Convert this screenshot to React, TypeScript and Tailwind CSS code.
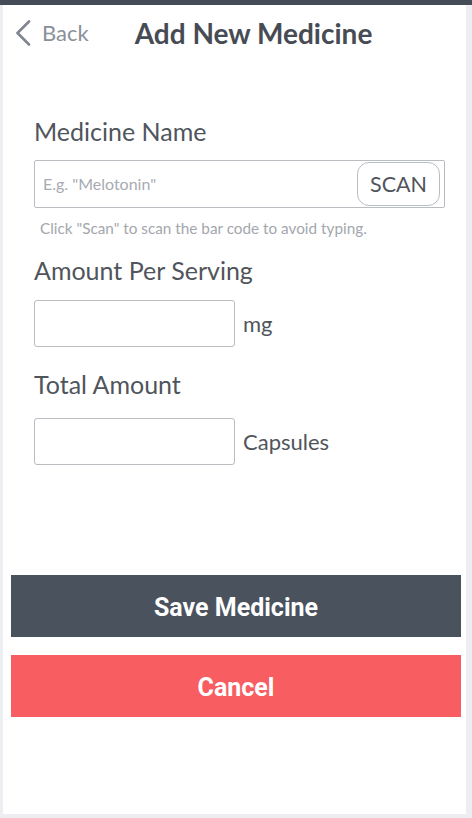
const lato = "font-['Lato','Liberation_Sans',sans-serif]";

const AddMedicine = () => {
  return (
    <div className="w-[472px] h-[818px] bg-[#eceef1] flex flex-col overflow-hidden">
      {/* top status strip */}
      <div className="h-[5px] bg-[#454c57]" />

      <div className={`ml-[3px] mr-[6px] mb-[4px] flex-1 bg-white flex flex-col ${lato}`}>
        {/* Header */}
        <div className="h-[55px] flex items-center">
          <button className="flex items-center text-[#8a9099] ml-[12px]">
            <svg width="16" height="26" viewBox="0 0 16 26" fill="none">
              <polyline points="14,1.5 2.5,13 14,24.5" stroke="#80868f" strokeWidth="2.6" strokeLinecap="round" strokeLinejoin="round" />
            </svg>
            <span className="text-[22px] ml-[11px] leading-none">Back</span>
          </button>
          <h1 className="ml-[46px] text-[28px] font-bold text-[#474c54] leading-none">
            Add New Medicine
          </h1>
        </div>

        {/* Form */}
        <div className="pl-[31px] flex flex-col">
          <label className="mt-[57px] text-[25px] leading-[28px] text-[#50555c]">Medicine Name</label>
          <div className="mt-[15px] w-[411px] h-[48px] border border-[#b9bcc1] rounded-[2px] flex items-center justify-between pl-[8px] pr-[4px]">
            <span className="text-[16px] text-[#a7abb0]">E.g. "Melotonin"</span>
            <button className="h-[44px] w-[83px] border border-[#b9bcc1] rounded-[12px] text-[21.5px] text-[#50555c]">
              SCAN
            </button>
          </div>
          <p className="mt-[10px] ml-[6px] text-[15.3px] leading-[20px] text-[#a3a7ad]">
            Click "Scan" to scan the bar code to avoid typing.
          </p>

          <label className="mt-[18px] text-[25px] leading-[28px] text-[#50555c]">Amount Per Serving</label>
          <div className="mt-[16px] flex items-center">
            <div className="w-[201px] h-[47px] border border-[#b9bcc1] rounded-[3px]" />
            <span className="ml-[8px] text-[22px] text-[#50555c]">mg</span>
          </div>

          <label className="mt-[23px] text-[25px] leading-[28px] text-[#50555c]">Total Amount</label>
          <div className="mt-[20px] flex items-center">
            <div className="w-[201px] h-[47px] border border-[#b9bcc1] rounded-[3px]" />
            <span className="ml-[8px] text-[22px] text-[#50555c]">Capsules</span>
          </div>
        </div>

        {/* Actions */}
        <div className="ml-[8px] w-[450px] flex flex-col font-['Roboto',sans-serif]">
          <button className="mt-[110px] h-[62px] pt-[3px] bg-[#4a525d] text-white text-[25px] font-bold">
            Save Medicine
          </button>
          <button className="mt-[18px] h-[62px] pt-[3px] bg-[#f75d61] text-white text-[25px] font-bold">
            Cancel
          </button>
        </div>
      </div>
    </div>
  );
};

export default function App() {
  return <AddMedicine />;
}
